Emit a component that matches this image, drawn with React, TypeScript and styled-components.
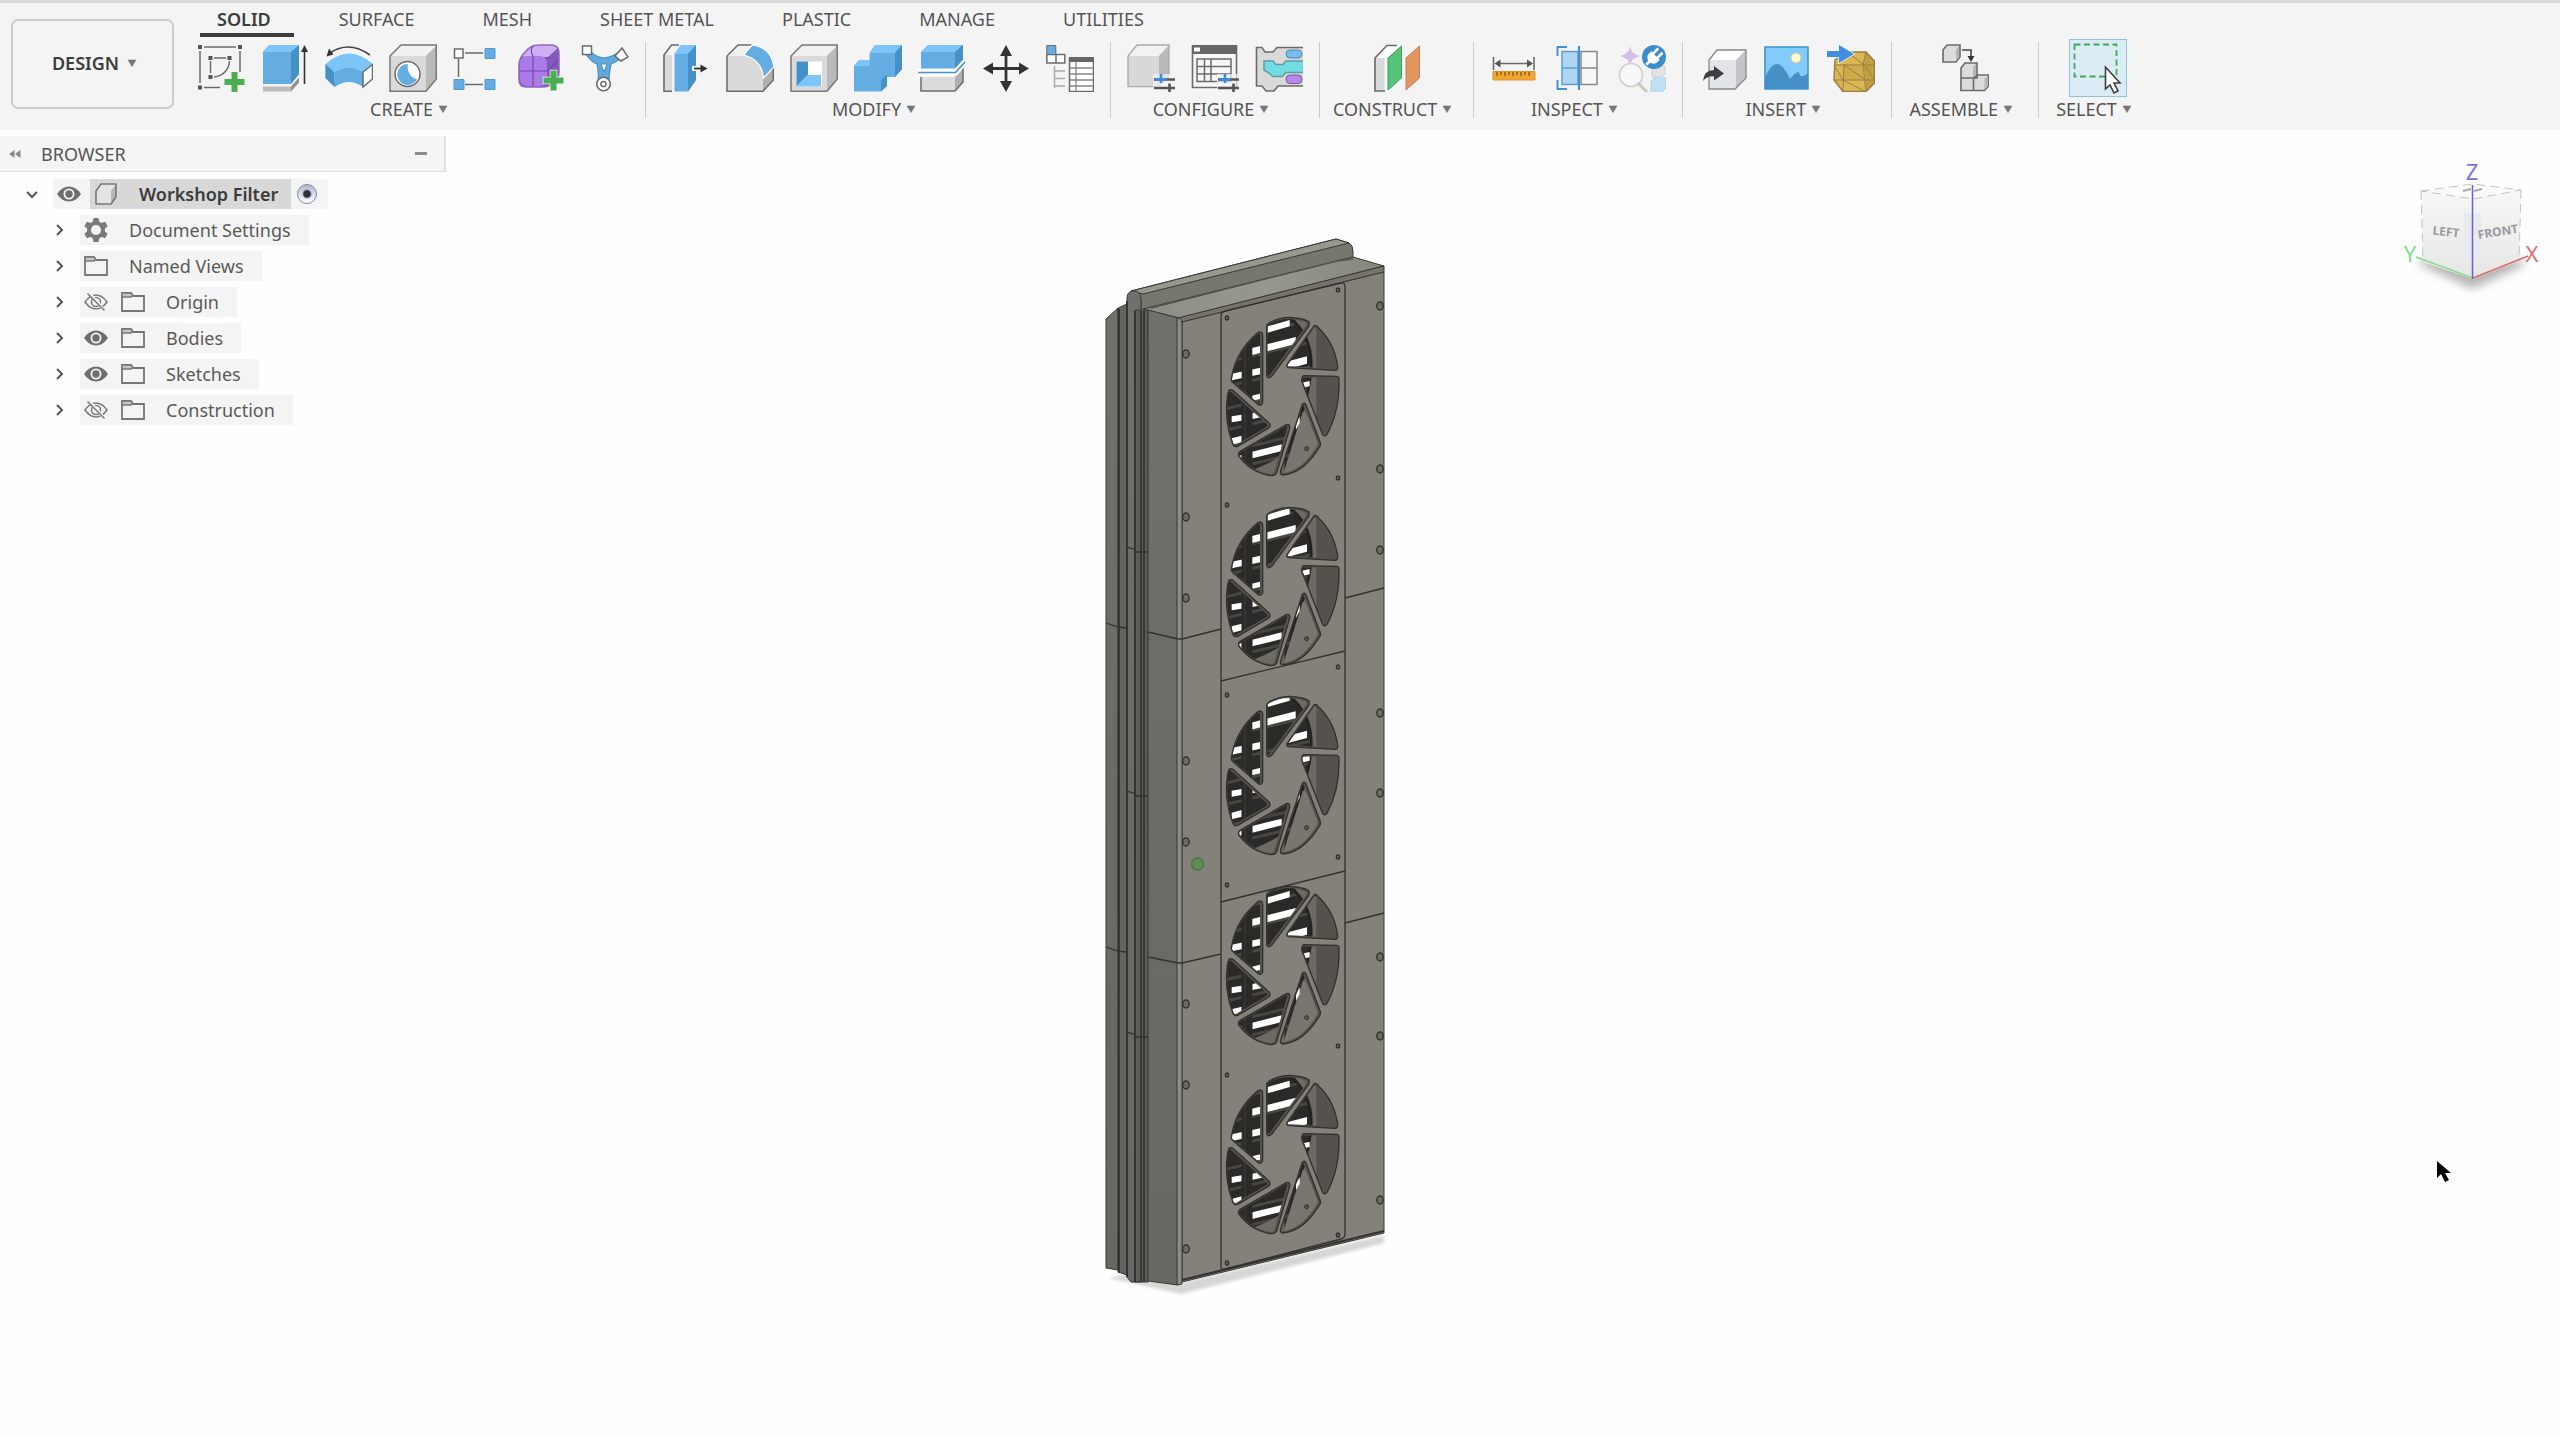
import React from "react";
import styled, { createGlobalStyle } from "styled-components";

const GlobalStyle = createGlobalStyle`
  *, *::before, *::after { box-sizing: border-box; }
  body {
    margin: 0;
    background: #fefefe;
    color: #4a4a4a;
    font-family: "Noto Sans", "Open Sans", sans-serif;
    font-size: 18px;
    line-height: 24px;
  }
  button {
    margin: 0;
    padding: 0;
    border: 0;
    background: none;
    color: inherit;
    font: inherit;
    cursor: pointer;
  }
  svg { display: block; }
`;

/* ---------- layout ---------- */

const Page = styled.div`
  display: flex;
  flex-direction: column;
  min-height: 100vh;
`;

const Ribbon = styled.header`
  display: flex;
  align-items: flex-start;
  gap: 7px;
  padding: 0 0 9px 11px;
  border-top: 3px solid #d8d8d8;
  background: #f4f4f4;
`;

const WorkspaceButton = styled.button`
  display: flex;
  align-items: center;
  justify-content: center;
  gap: 8px;
  width: 163px;
  height: 90px;
  margin-top: 16px;
  padding: 0 0 2px 4px;
  border: 2px solid #cccccc;
  border-radius: 7px;
  color: #3c3c3c;
  font-weight: 600;
`;

const RibbonBody = styled.div`
  display: flex;
  flex-direction: column;
  gap: 2px;
`;

const Tabs = styled.nav`
  display: flex;
  gap: 28px;
  padding-left: 19px;
`;

const Tab = styled.button<{ $active?: boolean }>`
  padding: 4px 23px 2px 17px;
  border-bottom: 4px solid ${(p) => (p.$active ? "#3c3c3c" : "transparent")};
  color: ${(p) => (p.$active ? "#3c3c3c" : "#555555")};
  font-weight: ${(p) => (p.$active ? 600 : 400)};
`;

const Groups = styled.div`
  display: flex;
`;

const Group = styled.section<{ $pad: number }>`
  display: flex;
  flex-direction: column;
  align-items: center;
  padding: 0 ${(p) => p.$pad}px;
`;

const Divider = styled.div`
  align-self: center;
  width: 1px;
  height: 76px;
  background: #cbcbcb;
`;

const Tools = styled.div`
  display: flex;
  align-items: center;
  gap: 16px;
  height: 58px;
`;

const Tool = styled.button<{ $selected?: boolean }>`
  width: ${(p) => (p.$selected ? 58 : 48)}px;
  height: ${(p) => (p.$selected ? 58 : 48)}px;
  border: ${(p) => (p.$selected ? "1px solid #8fc4e0" : "0")};
  background: ${(p) => (p.$selected ? "#dcecf5" : "none")};
`;

const GroupMenu = styled.button`
  display: flex;
  align-items: center;
  gap: 5px;
  padding-right: 8px;
  color: #555555;
`;

const Workspace = styled.main`
  position: relative;
  flex: 1;
  padding-top: 6px;
`;

const BrowserPanel = styled.aside`
  width: 446px;
`;

const BrowserHeader = styled.div`
  display: flex;
  align-items: center;
  height: 36px;
  padding: 0 17px 0 9px;
  border: 1px solid #dedede;
  border-width: 0 2px 1px 0;
  background: #f4f4f4;
`;

const BrowserTitle = styled.h2`
  flex: 1;
  margin: 0 0 0 20px;
  color: #555555;
  font-size: 18px;
  font-weight: 400;
`;

const Minus = styled.span`
  display: block;
  width: 12px;
  height: 3px;
  background: #8a8a8a;
`;

const Tree = styled.ul`
  display: flex;
  flex-direction: column;
  gap: 6px;
  margin: 0;
  padding: 7px 0 0;
  list-style: none;
`;

const Row = styled.li<{ $level: number }>`
  display: flex;
  align-items: center;
  height: 30px;
  padding-left: ${(p) => 21 + p.$level * 27}px;
`;

const Toggle = styled.button`
  display: flex;
  justify-content: center;
  width: 22px;
  margin-right: 10px;
`;

const Chip = styled.div<{ $current?: boolean; $end: number }>`
  display: flex;
  align-items: center;
  gap: 13px;
  height: 30px;
  padding: 0 ${(p) => p.$end}px 0 4px;
  background: ${(p) => (p.$current ? "#d8d8d8" : "#f4f4f4")};
`;

const Name = styled.button<{ $current?: boolean }>`
  margin-left: 8px;
  color: ${(p) => (p.$current ? "#3c3c3c" : "#5a5a5a")};
  font-weight: ${(p) => (p.$current ? 600 : 400)};
`;

const ActiveRadio = styled.input`
  appearance: none;
  width: 20px;
  height: 20px;
  margin: 0 2px;
  border: 1px solid #85889a;
  border-radius: 50%;
  background:
    radial-gradient(circle, #2d2f3a 0 3px, transparent 5px),
    linear-gradient(#b4b7cc, #d9dcec 50%, #ffffff);
`;

/* Items that float over the modelling canvas */

const Model = styled.svg`
  position: absolute;
  top: 91px;
  left: calc(50% - 189px);
`;

const ViewCube = styled.svg`
  position: absolute;
  top: 10px;
  right: 0;
`;

const Pointer = styled.svg`
  position: absolute;
  top: 1028px;
  right: 104px;
`;

/* ---------- small glyphs ---------- */

const Caret = () => (
  <svg width="10" height="8" viewBox="0 0 10 8" aria-hidden="true">
    <path d="M1 1h8L5 7.500z" fill="#777" stroke="#777" strokeWidth=".6" />
  </svg>
);

const Chevron = ({ open }: { open?: boolean }) => (
  <svg width="14" height="14" viewBox="0 0 14 14" fill="none" stroke="#555" strokeWidth="2" aria-hidden="true">
    <path d={open ? "M2 5l5 5 5-5" : "M5 2l5 5-5 5"} />
  </svg>
);

const EyeIcon = () => (
  <svg width="24" height="24" viewBox="0 0 24 24" aria-hidden="true">
    <path d="M0 12Q5 4.500 12 4.500T24 12Q19 19.500 12 19.500T0 12z" fill="#6e6e6e" />
    <circle cx="12" cy="12" r="4.600" fill="#6e6e6e" stroke="#f4f4f4" strokeWidth="1.800" />
  </svg>
);

const EyeOffIcon = () => (
  <svg width="24" height="24" viewBox="0 0 24 24" fill="none" stroke="#7c7c7c" strokeWidth="1.600" aria-hidden="true">
    <path d="M1 12Q6 5 12 5T23 12Q18 19 12 19T1 12z" />
    <circle cx="12" cy="12" r="4.500" />
    <path d="M5 3l16 18" stroke="#f4f4f4" strokeWidth="3" />
    <path d="M3.500 3.500l17 17" />
  </svg>
);

const FolderIcon = () => (
  <svg width="24" height="24" viewBox="0 0 24 24" fill="none" stroke="#777" strokeWidth="1.800" aria-hidden="true">
    <path d="M1 21V3h9l2 3h11v15z" />
    <path d="M1 3h9l1.500 2L10 7H1z" fill="#c6c6c6" strokeWidth="1.500" />
  </svg>
);

const GearIcon = () => (
  <svg width="24" height="24" viewBox="0 0 24 24" aria-hidden="true">
    <g fill="#7a7a7a">
      {[0, 60, 120].map((a) => (
        <path key={a} d="M9.500 0h5l1 5v14l-1 5h-5l-1-5V5z" transform={`rotate(${a} 12 12)`} />
      ))}
      <circle cx="12" cy="12" r="9" />
    </g>
    <circle cx="12" cy="12" r="5" fill="#f4f4f4" />
  </svg>
);

const BodyIcon = () => (
  <svg width="24" height="24" viewBox="0 0 24 24" aria-hidden="true">
    <path d="M2 9l5-7h15v13l-5 7H2z" fill="#e4e4e4" />
    <path d="M17 9l5-7v13l-5 7z" fill="#b5b5b5" />
    <path d="M2 9l5-7h15v13l-5 7H2z" fill="none" stroke="#777" strokeWidth="1.600" strokeLinejoin="round" />
  </svg>
);

/* ---------- ribbon drawings ---------- */

const GREY = "#6b6b6b";
const BLUE = "#63ade3";
const LIGHT = "#7dc5f8";
const DEEP = "#4590c6";

const Box = ({ right = 37, stroke = "#777" }: { right?: number; stroke?: string }) => (
  <>
    <path d={`M1 12L12 1H48V35L${right} 47.600H1z`} fill="#dadada" />
    <path d={`M1 12L12 1H48L${right} 12z`} fill="#f1f1f1" />
    <path d={`M${right} 12L48 1V35L${right} 47.600z`} fill="#b9b9b9" />
    <path d={`M1 12L12 1H47.300V35L${right} 47.200H1z`} fill="none" stroke={stroke} strokeWidth="1.500" />
  </>
);

const Plus = ({ x, y }: { x: number; y: number }) => (
  <path
    d={`M${x - 3} ${y - 10}h6v7h7v6h-7v7h-6v-7h-7v-6h7z`}
    fill="#4bac50"
    stroke="#f4f4f4"
    strokeWidth="1.500"
    paintOrder="stroke"
  />
);

const Sliders = () => (
  <>
    <path d="M26 30h22v18H26z" fill="#f4f4f4" opacity=".7" />
    <path d="M27 35.500h21M27 44h21" stroke="#555" strokeWidth="2.600" />
    <path d="M42.500 39.500v8.500" stroke="#555" strokeWidth="2.600" />
    <path d="M28 35.500h12M34 30v9" stroke="#3c8be0" strokeWidth="2.600" />
  </>
);

const drawings: Record<string, React.ReactNode> = {
  "Create Sketch": (
    <>
      <path d="M7 3h32M3 7v32M43 7v21M7 43.500h16M17 14h12M13.500 17v12M32.500 17C32 26 26 32 17 33" fill="none" stroke="#6b6b6b" strokeWidth="1.500" />
      <path d="M1 1h4v4H1zM41 1h4v4h-4zM1 41.500h4v4H1zM11.500 12h4v4h-4zM30.500 12h4v4h-4zM11.500 31h4v4h-4z" fill="#555" />
      <Plus x={37.5} y={38} />
    </>
  ),
  Extrude: (
    <>
      <path d="M2 8L8 1h30v29l-8 10H2z" fill={BLUE} />
      <path d="M2 8L8 1h30l-8 7z" fill={LIGHT} />
      <path d="M30 8l8-7v29l-8 10z" fill={DEEP} />
      <path d="M2 42.500h28v5H2z" fill="#bdbdbd" />
      <path d="M30 42.500l8-9v5l-8 9z" fill="#8f8f8f" />
      <path d="M43.500 40V6" stroke="#333" strokeWidth="1.600" />
      <path d="M43.500 1l3.500 7h-7z" fill="#333" />
    </>
  ),
  Revolve: (
    <>
      <path d="M.5 20Q24-1 48 20L38 28Q24 19 9 28V43L.5 34z" fill={LIGHT} />
      <path d="M9 28Q24 19 38 28V43Q24 33 10 43z" fill={BLUE} />
      <path d="M.5 20L9 28l1 15L.5 34z" fill={DEEP} />
      <path d="M38 28l9.500-7.500V35L38 43z" fill="#fff" stroke={GREY} strokeWidth="1.500" />
      <path d="M45 11Q24-4 5 9" fill="none" stroke="#444" strokeWidth="1.600" />
      <path d="M1.500 12.500l2.500-8 4.500 6z" fill="#333" />
    </>
  ),
  Hole: (
    <>
      <Box />
      <circle cx="18.500" cy="30" r="12.500" fill="#fff" stroke={GREY} strokeWidth="1.500" />
      <path d="M19 20A10.500 10.500 0 1 0 28 35.500A13 13 0 0 1 19 20z" fill={BLUE} />
    </>
  ),
  Pattern: (
    <>
      <path d="M12 9h18M5.500 15v18M12 40.500h18" stroke={GREY} strokeWidth="1.500" />
      <path d="M1.500 5h8.500v9H1.500z" fill="#fff" stroke={GREY} strokeWidth="1.500" />
      <path d="M32 4.500h10v10H32zM1 35.500h10v10H1zM32 35.500h10v10H32z" fill={BLUE} stroke="#5698cb" />
    </>
  ),
  "Create Form": (
    <>
      <path d="M2 20Q2 14 9 7Q14 1 22 1H34Q42 1 42 9V28Q42 34 37 38Q32 43 26 43H9Q2 43 2 36z" fill="#8558bd" />
      <path d="M5 12Q12 1 22 1H34Q41 1 41 6L33 13H8z" fill="#d0aef4" />
      <rect x="3" y="12" width="27" height="30" rx="7" fill="#a97be6" />
      <path d="M17 1q-5 5-1 11v30M2 27h29l11-12M30 15L41 5" fill="none" stroke="#7747af" strokeWidth="1.200" />
      <path d="M2 20Q2 14 9 7Q14 1 22 1H34Q42 1 42 9V28Q42 34 37 38Q32 43 26 43H9Q2 43 2 36z" fill="none" stroke="#8d6bb8" strokeWidth="1.500" />
      <Plus x={36.5} y={36.5} />
    </>
  ),
  Derive: (
    <>
      <path d="M4 9Q10 18 16 20Q18 28 17 38L22.500 45L28 38Q28 28 30 20Q37 17 44 11L40 6Q33 13 23 14Q13 13 9 6z" fill="#5fa9df" stroke="#4a8fc4" strokeWidth="1.200" />
      <path d="M20 20h6l-3 8z" fill="#fff" stroke="#4a8fc4" />
      <path d="M1.500 2h9v8.500h-9zM41 4l6 9-7 4-6-5z" fill="#fff" stroke={GREY} strokeWidth="1.500" />
      <circle cx="22.500" cy="40" r="6.800" fill="#fff" stroke={GREY} strokeWidth="1.600" />
      <circle cx="22.500" cy="40" r="2.600" fill="none" stroke={GREY} strokeWidth="1.500" />
    </>
  ),
  "Press Pull": (
    <>
      <path d="M2 11h8v36.500H2z" fill="#dadada" />
      <path d="M10 47.300H2V11L9.500 1H17" fill="none" stroke={GREY} strokeWidth="1.600" />
      <path d="M12.500 10L19 1h15v35l-8 11.500H12.500z" fill={BLUE} />
      <path d="M12.500 10L19 1h15l-8 9z" fill={LIGHT} />
      <path d="M26 10l8-9v35l-8 11.500z" fill={DEEP} />
      <path d="M30 24.500h10" stroke="#f4f4f4" strokeWidth="5" />
      <path d="M32 24.500h8" stroke="#333" strokeWidth="1.800" />
      <path d="M38.500 20.500l7 4-7 4z" fill="#333" />
    </>
  ),
  Fillet: (
    <>
      <path d="M1 12L12 1h14l22 22v13L37 47.600H1z" fill="#dadada" />
      <path d="M1 12L12 1h14l-8 11z" fill="#f1f1f1" />
      <path d="M37 34l11-10v12L37 47.600z" fill="#b0b0b0" />
      <path d="M1 12L12 1H26M47.300 23V36L37 47.200H1V12" fill="none" stroke={GREY} strokeWidth="1.500" />
      <path d="M26 1Q45 3 48 23L37.500 34Q36 16 18 11z" fill={BLUE} stroke="#fff" strokeWidth="1.200" />
    </>
  ),
  Shell: (
    <>
      <Box />
      <path d="M6.500 17.500H32V42.500H6.500z" fill="#fff" />
      <path d="M6.500 17.500H18V31L6.500 42.500z" fill={DEEP} />
      <path d="M6.500 42.500L17 31H31V42.500z" fill={LIGHT} />
    </>
  ),
  Combine: (
    <>
      <path d="M0 22l5-6h10.600V9L21 1h27v24l-7 8h-8v9l-6 5.600H0z" fill={BLUE} />
      <path d="M15.600 9L21 1h27l-7 8zM0 22l5-6h10.600v6z" fill={LIGHT} />
      <path d="M41 9l7-8v24l-7 8zM27 36l6-5v11l-6 5.600z" fill={DEEP} />
    </>
  ),
  "Split Body": (
    <>
      <path d="M3 8l7-7h35v16l-8 7.500H3z" fill={BLUE} />
      <path d="M3 8l7-7h35l-8 7z" fill={LIGHT} />
      <path d="M37 8l8-7v16l-8 7.500z" fill={DEEP} />
      <path d="M3 33h34v14H3z" fill="#dcdcdc" />
      <path d="M37 33l8-9v14l-8 9z" fill="#b0b0b0" />
      <path d="M3 33v14h34l8-9V24" fill="none" stroke={GREY} strokeWidth="1.500" />
      <path d="M0 28.500h37.500L47 18" fill="none" stroke="#fff" strokeWidth="6" />
      <path d="M0 28.500h37.500L47 18" fill="none" stroke="#4a90cc" strokeWidth="1.700" />
    </>
  ),
  Move: (
    <>
      <path d="M24 6v37M6 24.500h36" stroke="#333" strokeWidth="2.800" />
      <path d="M24 1l6 11H18zM24 48l6-11H18zM1 24.500l10-6v12zM47 24.500l-10-6v12z" fill="#333" />
    </>
  ),
  Parameters: (
    <>
      <path d="M.800 10.500h18V19H.800zM10 10.500V19" fill="#fff" stroke={GREY} strokeWidth="1.500" />
      <path d="M.800 1.500h9v9h-9z" fill={BLUE} stroke={GREY} />
      <path d="M8.500 22v22M8.500 27H19M8.500 34.500H19M8.500 42H19" stroke="#aaa" strokeWidth="1.500" />
      <path d="M23.500 14h24v33.500h-24z" fill="#fff" stroke={GREY} strokeWidth="1.500" />
      <path d="M23 13h25v5H23z" fill="#666" />
      <path d="M30 18v29M24 24h23M24 30h23M24 36h23M24 42h23" stroke="#888" strokeWidth="1.300" />
    </>
  ),
  "Configure Design": (
    <>
      <path d="M1 12L10 1h32v31L32 42.600H1z" fill="#d8d8d8" />
      <path d="M1 12L10 1h32L32 12z" fill="#f2f2f2" />
      <path d="M32 12L42 1v33l-10 8.600z" fill="#b9b9b9" />
      <path d="M1 12L10 1h32v32M28 42.600H1V12" fill="none" stroke="#aaa" strokeWidth="1.300" />
      <Sliders />
    </>
  ),
  "Configuration Table": (
    <>
      <path d="M1.500 2h44v41.500h-44z" fill="#f6f6f6" stroke={GREY} strokeWidth="1.600" />
      <path d="M1 1h45v9H1z" fill="#666" />
      <path d="M3 3.500h6v4H3z" fill="#fff" />
      <path d="M6 15h34v22.500H6zM13.500 15v22M20 15v22M6 22.500h34M6 30h34" fill="none" stroke={GREY} strokeWidth="1.500" />
      <Sliders />
    </>
  ),
  "Theme Table": (
    <>
      <path d="M48 3.500H22L18 8H10L7 3.500H1.500V42H7l4 5h8l4-5h25" fill="#d9d9d9" stroke={GREY} strokeWidth="1.600" />
      <path d="M48 17H31l-3 3.500h-7L18 17H9v9l5 3 4 3.500h9l4-4h17" fill="#72dce4" stroke="#5e9ca1" strokeWidth="1.500" />
      <rect x="31" y="6" width="16" height="8" rx="4" fill="#74bdf5" stroke="#5688ad" />
      <rect x="31" y="31" width="16" height="8.500" rx="4" fill="#b788ef" stroke="#775c96" />
    </>
  ),
  "Offset Plane": (
    <>
      <path d="M2 14L14 1.500h13L15 14z" fill="#fff" />
      <path d="M2 14h9.500v33H2z" fill="#dadada" />
      <path d="M12 47H2V14L14 1.500h10" fill="none" stroke={GREY} strokeWidth="1.700" />
      <path d="M15 14L28.500 2v32L15 46z" fill="#55c479" stroke="#429b60" />
      <path d="M33 14L46.500 2v32L33 46z" fill="#e5955e" stroke="#b98361" />
    </>
  ),
  Measure: (
    <>
      <path d="M3.500 13v13M44 13v13M8 19.500h32" stroke={GREY} strokeWidth="1.600" />
      <path d="M4.500 19.500l6-4v8zM43 19.500l-6-4v8z" fill="#555" />
      <path d="M3 27.500h42V36H3z" fill="#f2a733" stroke="#dc9427" />
      <path d="M7 28v4M11 28v3M15 28v4M19 28v3M23 28v4M27 28v3M31 28v4M35 28v3M39 28v4" stroke="#7c551a" strokeWidth="1.300" />
    </>
  ),
  "Section Analysis": (
    <>
      <path d="M27 7.500h16v33H27zM27 24h16" fill="#f6f6f6" stroke="#888" strokeWidth="1.500" />
      <path d="M8 7.500h16v33H8zM8 24h16" fill="#afd5f2" stroke="#5a9fd4" strokeWidth="1.500" />
      <path d="M13 3H3.500v9M13 45H3.500v-9M25 2v44" fill="none" stroke="#4191d3" strokeWidth="2" />
    </>
  ),
  "Inspect Add-in": (
    <>
      <path d="M12 2q1 8 10 10-9 2-10 10-1-8-10-10 9-2 10-10z" fill="#d3bfe8" />
      <circle cx="13" cy="31" r="11.500" fill="#f8f8f8" stroke="#cfcfcf" strokeWidth="1.600" />
      <path d="M20 39l9 9" stroke="#cfc6ba" strokeWidth="3" />
      <path d="M34 22h13v8l-3 3H34z" fill="#e2e2e2" stroke="#d0d0d0" />
      <path d="M33 37l4-3h11v10l-4 4H33z" fill="#bfe0f5" stroke="#b0d0e6" />
      <circle cx="36" cy="13" r="12" fill="#3c8dc9" />
      <g transform="rotate(45 36 13)">
        <path d="M30 11h12v3q0 5-6 6-6-1-6-6z" fill="#fff" />
        <path d="M33 4v8M39 4v8M36 18v6" stroke="#fff" strokeWidth="2.600" />
      </g>
    </>
  ),
  "Insert Derive": (
    <>
      <path d="M10 16l8-10h29v28l-11 11H10z" fill="#e3e4e8" />
      <path d="M10 16l8-10h29l-10 10z" fill="#fdfdfd" />
      <path d="M37 16L47 6v28L37 45z" fill="#c4c5ca" />
      <path d="M10 16l8-10h29v28l-11 11H10z" fill="none" stroke="#888" strokeWidth="1.300" />
      <path d="M4 37q1-11 11-11v-4l10 7.500-10 7v-4q-6-1-11 4.500z" fill="#3f3f3f" />
    </>
  ),
  Canvas: (
    <>
      <path d="M2 3h43v42H2z" fill="#82ccfb" />
      <path d="M2 33Q8 20 14 20T27 35Q32 28 36 28 37 36 45 29V45H2z" fill={DEEP} />
      <circle cx="33" cy="14" r="5" fill="#fdf9cf" stroke="#cfd0a0" />
      <path d="M2 3h43v42H2z" fill="none" stroke="#3f93d0" strokeWidth="1.600" />
    </>
  ),
  "Insert Mesh": (
    <>
      <path d="M8 16l12-8h19l9 9v22l-9 9H16l-9-12z" fill="#d9b752" />
      <path d="M39 8l9 9v22l-9 9V36l-3-16z" fill="#c09e43" />
      <path d="M17 20h19l3 16H16z" fill="#cfac4b" />
      <path d="M7 21h41M7 36h41M17 21l22 15M36 20l3 28M17 20l-1 28M39 8l-3 12 12 16M16 36l23 12M20 8l16 12M7 21l9 15M7 36l10 12" fill="none" stroke="#9a8040" />
      <path d="M8 16l12-8h19l8.500 9v22l-8.500 8.500H16L7 36z" fill="none" stroke="#9b8143" strokeWidth="1.500" />
      <path d="M0 7h12V1l15 9-15 9v-6H0z" fill="#3f8ee4" stroke="#f4f4f4" strokeWidth="1.500" paintOrder="stroke" />
    </>
  ),
  "New Component": (
    <>
      <path d="M2 6l4-5h13v12l-4 5H2zM20 24l4-5h12v15H20zM20 34h12.500v12.500H20zM32.500 34l4-3H47.500v11l-4 4.500H32.500z" fill="#dcdcdc" stroke={GREY} strokeWidth="1.600" />
      <path d="M15 6l3-4v11l-3 4zM32 23l3-3v11l-3 2zM43.500 35l3.500-3v10l-3.500 4z" fill="#b5b5b5" />
      <path d="M21 6h9v7" fill="none" stroke="#444" strokeWidth="1.600" />
      <path d="M26.500 12h7L30 18z" fill="#333" />
    </>
  ),
};

const SelectDrawing = () => (
  <svg width="56" height="56" viewBox="0 0 56 56" aria-hidden="true">
    <path d="M4.500 4.500h42v32h-42z" fill="none" stroke="#3fa95c" strokeWidth="1.800" strokeDasharray="6 3.500" />
    <path d="M35.500 27v22l4.500-4 4 8 4-2-4-8h6z" fill="#fff" stroke="#3c3c3c" strokeWidth="1.600" />
  </svg>
);

const groups = [
  { label: "CREATE", pad: 16, tools: ["Create Sketch", "Extrude", "Revolve", "Hole", "Pattern", "Create Form", "Derive"] },
  { label: "MODIFY", pad: 16, tools: ["Press Pull", "Fillet", "Shell", "Combine", "Split Body", "Move", "Parameters"] },
  { label: "CONFIGURE", pad: 16, tools: ["Configure Design", "Configuration Table", "Theme Table"] },
  { label: "CONSTRUCT", pad: 13, tools: ["Offset Plane"] },
  { label: "INSPECT", pad: 16, tools: ["Measure", "Section Analysis", "Inspect Add-in"] },
  { label: "INSERT", pad: 16, tools: ["Insert Derive", "Canvas", "Insert Mesh"] },
  { label: "ASSEMBLE", pad: 17, tools: ["New Component"] },
  { label: "SELECT", pad: 17, tools: ["Select"] },
];

const tabs = ["SOLID", "SURFACE", "MESH", "SHEET METAL", "PLASTIC", "MANAGE", "UTILITIES"];

/* ---------- browser tree ---------- */

type Node = { name: string; visible?: boolean; icon: "gear" | "folder" };

const nodes: Node[] = [
  { name: "Document Settings", icon: "gear" },
  { name: "Named Views", icon: "folder" },
  { name: "Origin", visible: false, icon: "folder" },
  { name: "Bodies", visible: true, icon: "folder" },
  { name: "Sketches", visible: true, icon: "folder" },
  { name: "Construction", visible: false, icon: "folder" },
];

const TreeNode = ({ node }: { node: Node }) => (
  <Row $level={1}>
    <Toggle aria-label={`Expand ${node.name}`}>
      <Chevron />
    </Toggle>
    <Chip $end={18}>
      {node.visible !== undefined && (
        <button aria-label={`Toggle visibility of ${node.name}`}>{node.visible ? <EyeIcon /> : <EyeOffIcon />}</button>
      )}
      {node.icon === "gear" ? <GearIcon /> : <FolderIcon />}
      <Name>{node.name}</Name>
    </Chip>
  </Row>
);

/* ---------- model ---------- */

const blades = [
  "M172 94Q184 90 185 102V305Q182 316 172 311L94 243Q89 238 92 228Q105 150 172 94z",
  "M197 76Q197 70 204 66Q245 44 285 51Q312 54 324 63Q326 70 322 78L212 226Q198 236 197 222z",
  "M340 74Q346 72 352 80Q400 125 410 196Q411 208 402 208L262 200Q254 197 260 188z",
  "M308 224L408 226Q414 227 414 236Q416 330 378 400Q370 410 364 398L302 240Q302 226 308 224z",
  "M304 310Q311 302 315 312L357 422Q361 432 354 440Q308 516 246 522Q236 522 239 510z",
  "M116 452L256 371Q268 368 266 382L227 516Q222 525 208 524Q150 514 114 466Q110 458 116 452z",
  "M84 268Q90 264 98 270L204 366Q212 377 200 383L110 436Q100 440 95 428Q68 355 80 280z",
];

/* Daylight between the louvres: left x, left y, right x, right y, height */
const slats = [
  [200, 76, 266, 57, 19],
  [150, 142, 284, 108, 21],
  [92, 218, 178, 200, 20],
  [250, 184, 318, 166, 22],
  [152, 284, 186, 276, 16],
  [300, 246, 326, 240, 16],
  [92, 346, 122, 341, 18],
  [154, 336, 184, 330, 18],
  [92, 412, 122, 404, 20],
  [285, 366, 296, 346, 20],
  [154, 452, 242, 430, 20],
  [110, 466, 122, 462, 18],
];

const Fan = ({ y, shift }: { y: number; shift: number }) => (
  <g transform={`translate(110 ${y - 96}) scale(.3333)`}>
    <g clipPath="url(#blades)">
      <path d="M60 40h380v500H60z" fill="#2b2a28" />
      <g transform={`translate(0 ${shift})`}>
        {[100, 166, 240, 306, 370, 436, 490].map((top) => (
          <path key={top} d={`M60 ${top + 16}L340 ${top - 50}v9L60 ${top + 25}z`} fill="#494742" />
        ))}
      </g>
      <path d="M265 40Q345 110 328 230T245 540H440V40z" fill="#6c6a63" />
      <path d="M346 60H440V420H346z" fill="#54524d" />
      <path d="M265 50Q345 110 328 230T240 480" fill="none" stroke="#24231f" strokeWidth="8" />
      <path d="M306 330L370 400V540H240z" fill="#78766e" />
      <path d="M140 512Q190 496 250 460V540H150z" fill="#6c6a63" />
      <g transform={`translate(0 ${shift})`}>
        {slats.map(([x1, y1, x2, y2, h]) => (
          <path key={`${x1}-${y1}`} d={`M${x1} ${y1}L${x2} ${y2}v${h}L${x1} ${y1 + h}z`} fill="#fff" />
        ))}
      </g>
      <path d="M122 60h32v450h-32z" fill="#2b2a28" />
      <path d="M132 60v450" stroke="#403e3a" strokeWidth="3" />
      <circle cx="317" cy="443" r="6" fill="#5b5953" stroke="#2e2d2a" strokeWidth="3" />
      {blades.map((d) => (
        <path key={d} d={d} transform="translate(-3 0)" fill="none" stroke="#55534d" strokeWidth="10" />
      ))}
    </g>
    {blades.map((d) => (
      <path key={d} d={d} fill="none" stroke="#32312d" strokeWidth="4" />
    ))}
  </g>
);

const fanRows = [
  [176, 0],
  [366, -6],
  [555, -14],
  [745, 6],
  [934, 8],
];

const Hole = ({ x, y, r }: { x: number; y: number; r: number }) => (
  <ellipse cx={x} cy={y} rx={r * 0.8} ry={r} fill="#6d6b65" stroke="#33322f" strokeWidth="1.400" />
);

const FilterModel = () => (
  <Model width="310" height="1090" viewBox="0 0 310 1090" role="img" aria-label="Workshop Filter model">
    <defs>
      <clipPath id="blades">
        {blades.map((d) => (
          <path key={d} d={d} />
        ))}
      </clipPath>
      <linearGradient id="side" x1="0" y1="0" x2="0" y2="1">
        <stop offset="0" stopColor="#70716d" />
        <stop offset=".55" stopColor="#6a6b67" />
        <stop offset="1" stopColor="#656863" />
      </linearGradient>
      <linearGradient id="topFace" x1="0" y1="0" x2="1" y2="0">
        <stop offset="0" stopColor="#8d8f87" />
        <stop offset=".5" stopColor="#96988f" />
        <stop offset="1" stopColor="#86867c" />
      </linearGradient>
      <filter id="soft">
        <feGaussianBlur stdDeviation="1.500" />
      </filter>
    </defs>
    <path d="M18 1057L40 1052 90 1062 293 1014V1022L90 1073z" fill="#d6d6d6" filter="url(#soft)" />
    <g stroke="#3a3936" strokeWidth="1">
      <path d="M15 98L27 87V1049L15 1047z" fill="url(#side)" />
      <path d="M27 87L36 83V1054L27 1051z" fill="#62645f" />
      <path d="M40 70L245 18 258 22Q262 24 262 30V42L50 92V78z" fill="#77776f" />
      <path d="M40 70L245 18 258 22 52 73z" fill="#97998f" />
      <path d="M36 1056V77Q36 70 43 70T50 78V1061H40z" fill="url(#side)" />
      <path d="M44 89H57V1061H44z" fill="#5c5e59" />
      <path d="M52 88L262 36 293 45 88 97z" fill="url(#topFace)" />
      <path d="M57 89L87 97V1064L57 1060z" fill="url(#side)" />
      <path d="M87 97L293 45V51L91 101z" fill="#75736b" />
      <path d="M91 101L293 51V1012L91 1061z" fill="#83817a" />
      <path d="M86 97Q91 97 91 102V1063L86 1064z" fill="#8d8b84" />
    </g>
    <g fill="none" stroke="#33322f" strokeWidth="1.300">
      <path d="M28 88V1052M36 80V1056M50 90V1061M53 90V1061M44 90V1061" strokeWidth="1.800" />
      <path d="M60 87L246 40 262 38" stroke="#55544e" />
      <path d="M130 1046V95Q130 91 134 90L250 62Q254 61 254 66V1013Q254 1017 250 1018L134 1048Q130 1049 130 1046z" />
      <path d="M91 1059L293 1010" strokeWidth="2.200" />
      <path d="M130 460L254 430M130 681L254 650" />
      <path d="M57 411L87 418H91L130 408M57 736L87 742H91L130 733M254 377L293 367M254 702L293 692" />
      <path d="M15 402L27 406 35 407M15 726L27 730 35 731M36 326L43 328M44 331H57M36 570L43 572M44 575H57M36 811L43 813M44 816H57" />
    </g>
    {[133, 296, 377, 540, 621, 783, 864, 1028].map((y) => (
      <Hole key={y} x={95} y={y} r={4} />
    ))}
    {[85, 248, 329, 492, 572, 736, 815, 979].map((y) => (
      <Hole key={y} x={289} y={y} r={4} />
    ))}
    {[97, 284, 474, 664, 854, 1042].map((y) => (
      <Hole key={y} x={136} y={y} r={2} />
    ))}
    {[69, 257, 446, 636, 825, 1014].map((y) => (
      <Hole key={y} x={247} y={y} r={2} />
    ))}
    {fanRows.map(([y, shift]) => (
      <Fan key={y} y={y} shift={shift} />
    ))}
    <circle cx="106.500" cy="643" r="6" fill="#5f8e57" stroke="#4c7246" strokeWidth="1.500" />
  </Model>
);

const AxisCube = () => (
  <ViewCube width="180" height="160" viewBox="0 0 180 160" role="img" aria-label="View cube">
    <defs>
      <filter id="shade" x="-20%" y="-40%" width="140%" height="180%">
        <feGaussianBlur stdDeviation="5" />
      </filter>
      <linearGradient id="face" x1="0" y1="0" x2="0" y2="1">
        <stop offset="0" stopColor="#f7f7f7" />
        <stop offset="1" stopColor="#e6e6e6" />
      </linearGradient>
    </defs>
    <path d="M36 123L93 106 148 123 93 149z" fill="#b5b5b5" filter="url(#shade)" />
    <path d="M41 51L93 44 141 50 93 59z" fill="#fafafa" />
    <path d="M41 51L93 59V139L43 122z" fill="url(#face)" />
    <path d="M93 59L141 50 139 121 93 139z" fill="url(#face)" />
    <path d="M84 72L93 74 101 72V118L93 122 84 118z" fill="#e9e9f1" />
    <path d="M41 51L93 44 141 50 93 59zM41 51L43 122M141 50L139 121" fill="none" stroke="#c4c4c4" strokeDasharray="9 5" />
    <path d="M83 51l8-2M94 51l8-2" stroke="#aaa" strokeWidth="2" />
    <path d="M36 117L93 138" stroke="#86dd8d" strokeWidth="1.500" />
    <path d="M93 138L148 116" stroke="#df6b6b" strokeWidth="1.500" />
    <path d="M92.500 45V139" stroke="#6663cf" strokeWidth="1.500" />
    <g fontFamily="Noto Sans, sans-serif" fontSize="12" fontWeight="700" fill="#999ca1" textAnchor="middle">
      <text x="66" y="96" transform="rotate(6 66 92)">LEFT</text>
      <text x="118" y="96" transform="rotate(-9 118 92)">FRONT</text>
    </g>
    <g fontFamily="Noto Sans, sans-serif" fontSize="22" textAnchor="middle">
      <text x="92" y="40" fill="#7674e0">Z</text>
      <text x="30" y="122" fill="#7fe088">Y</text>
      <text x="152" y="122" fill="#e06f6f">X</text>
    </g>
  </ViewCube>
);

export default function App() {
  return (
    <Page>
      <GlobalStyle />
      <Ribbon>
        <WorkspaceButton aria-haspopup="menu">
          DESIGN
          <Caret />
        </WorkspaceButton>
        <RibbonBody>
          <Tabs>
            {tabs.map((tab, i) => (
              <Tab key={tab} $active={i === 0}>
                {tab}
              </Tab>
            ))}
          </Tabs>
          <Groups>
            {groups.map((group, i) => (
              <React.Fragment key={group.label}>
                {i > 0 && <Divider />}
                <Group $pad={group.pad}>
                  <Tools>
                    {group.tools.map((tool) => (
                      <Tool key={tool} aria-label={tool} $selected={tool === "Select"}>
                        {tool === "Select" ? (
                          <SelectDrawing />
                        ) : (
                          <svg width="48" height="48" viewBox="0 0 48 48" aria-hidden="true">
                            {drawings[tool]}
                          </svg>
                        )}
                      </Tool>
                    ))}
                  </Tools>
                  <GroupMenu aria-haspopup="menu">
                    {group.label}
                    <Caret />
                  </GroupMenu>
                </Group>
              </React.Fragment>
            ))}
          </Groups>
        </RibbonBody>
      </Ribbon>
      <Workspace>
        <BrowserPanel>
          <BrowserHeader>
            <button aria-label="Collapse browser">
              <svg width="12" height="8" viewBox="0 0 12 8" aria-hidden="true">
                <path d="M5.500 0v8L0 4zM11.500 0v8L6 4z" fill="#888" />
              </svg>
            </button>
            <BrowserTitle>BROWSER</BrowserTitle>
            <button aria-label="Minimize browser">
              <Minus />
            </button>
          </BrowserHeader>
          <Tree>
            <Row $level={0}>
              <Toggle aria-label="Collapse Workshop Filter">
                <Chevron open />
              </Toggle>
              <Chip $end={9}>
                <button aria-label="Toggle visibility of Workshop Filter">
                  <EyeIcon />
                </button>
              </Chip>
              <Chip $current $end={13}>
                <BodyIcon />
                <Name $current>Workshop Filter</Name>
              </Chip>
              <Chip $end={9}>
                <ActiveRadio type="radio" name="active-component" aria-label="Activate Workshop Filter" defaultChecked />
              </Chip>
            </Row>
            {nodes.map((node) => (
              <TreeNode key={node.name} node={node} />
            ))}
          </Tree>
        </BrowserPanel>
        <FilterModel />
        <AxisCube />
        <Pointer width="24" height="30" viewBox="0 0 24 30" aria-hidden="true">
          <path d="M5 3v17l4-4 4 8 4-2-4-7h6z" fill="#000" stroke="#fff" strokeWidth="2" paintOrder="stroke" />
        </Pointer>
      </Workspace>
    </Page>
  );
}
